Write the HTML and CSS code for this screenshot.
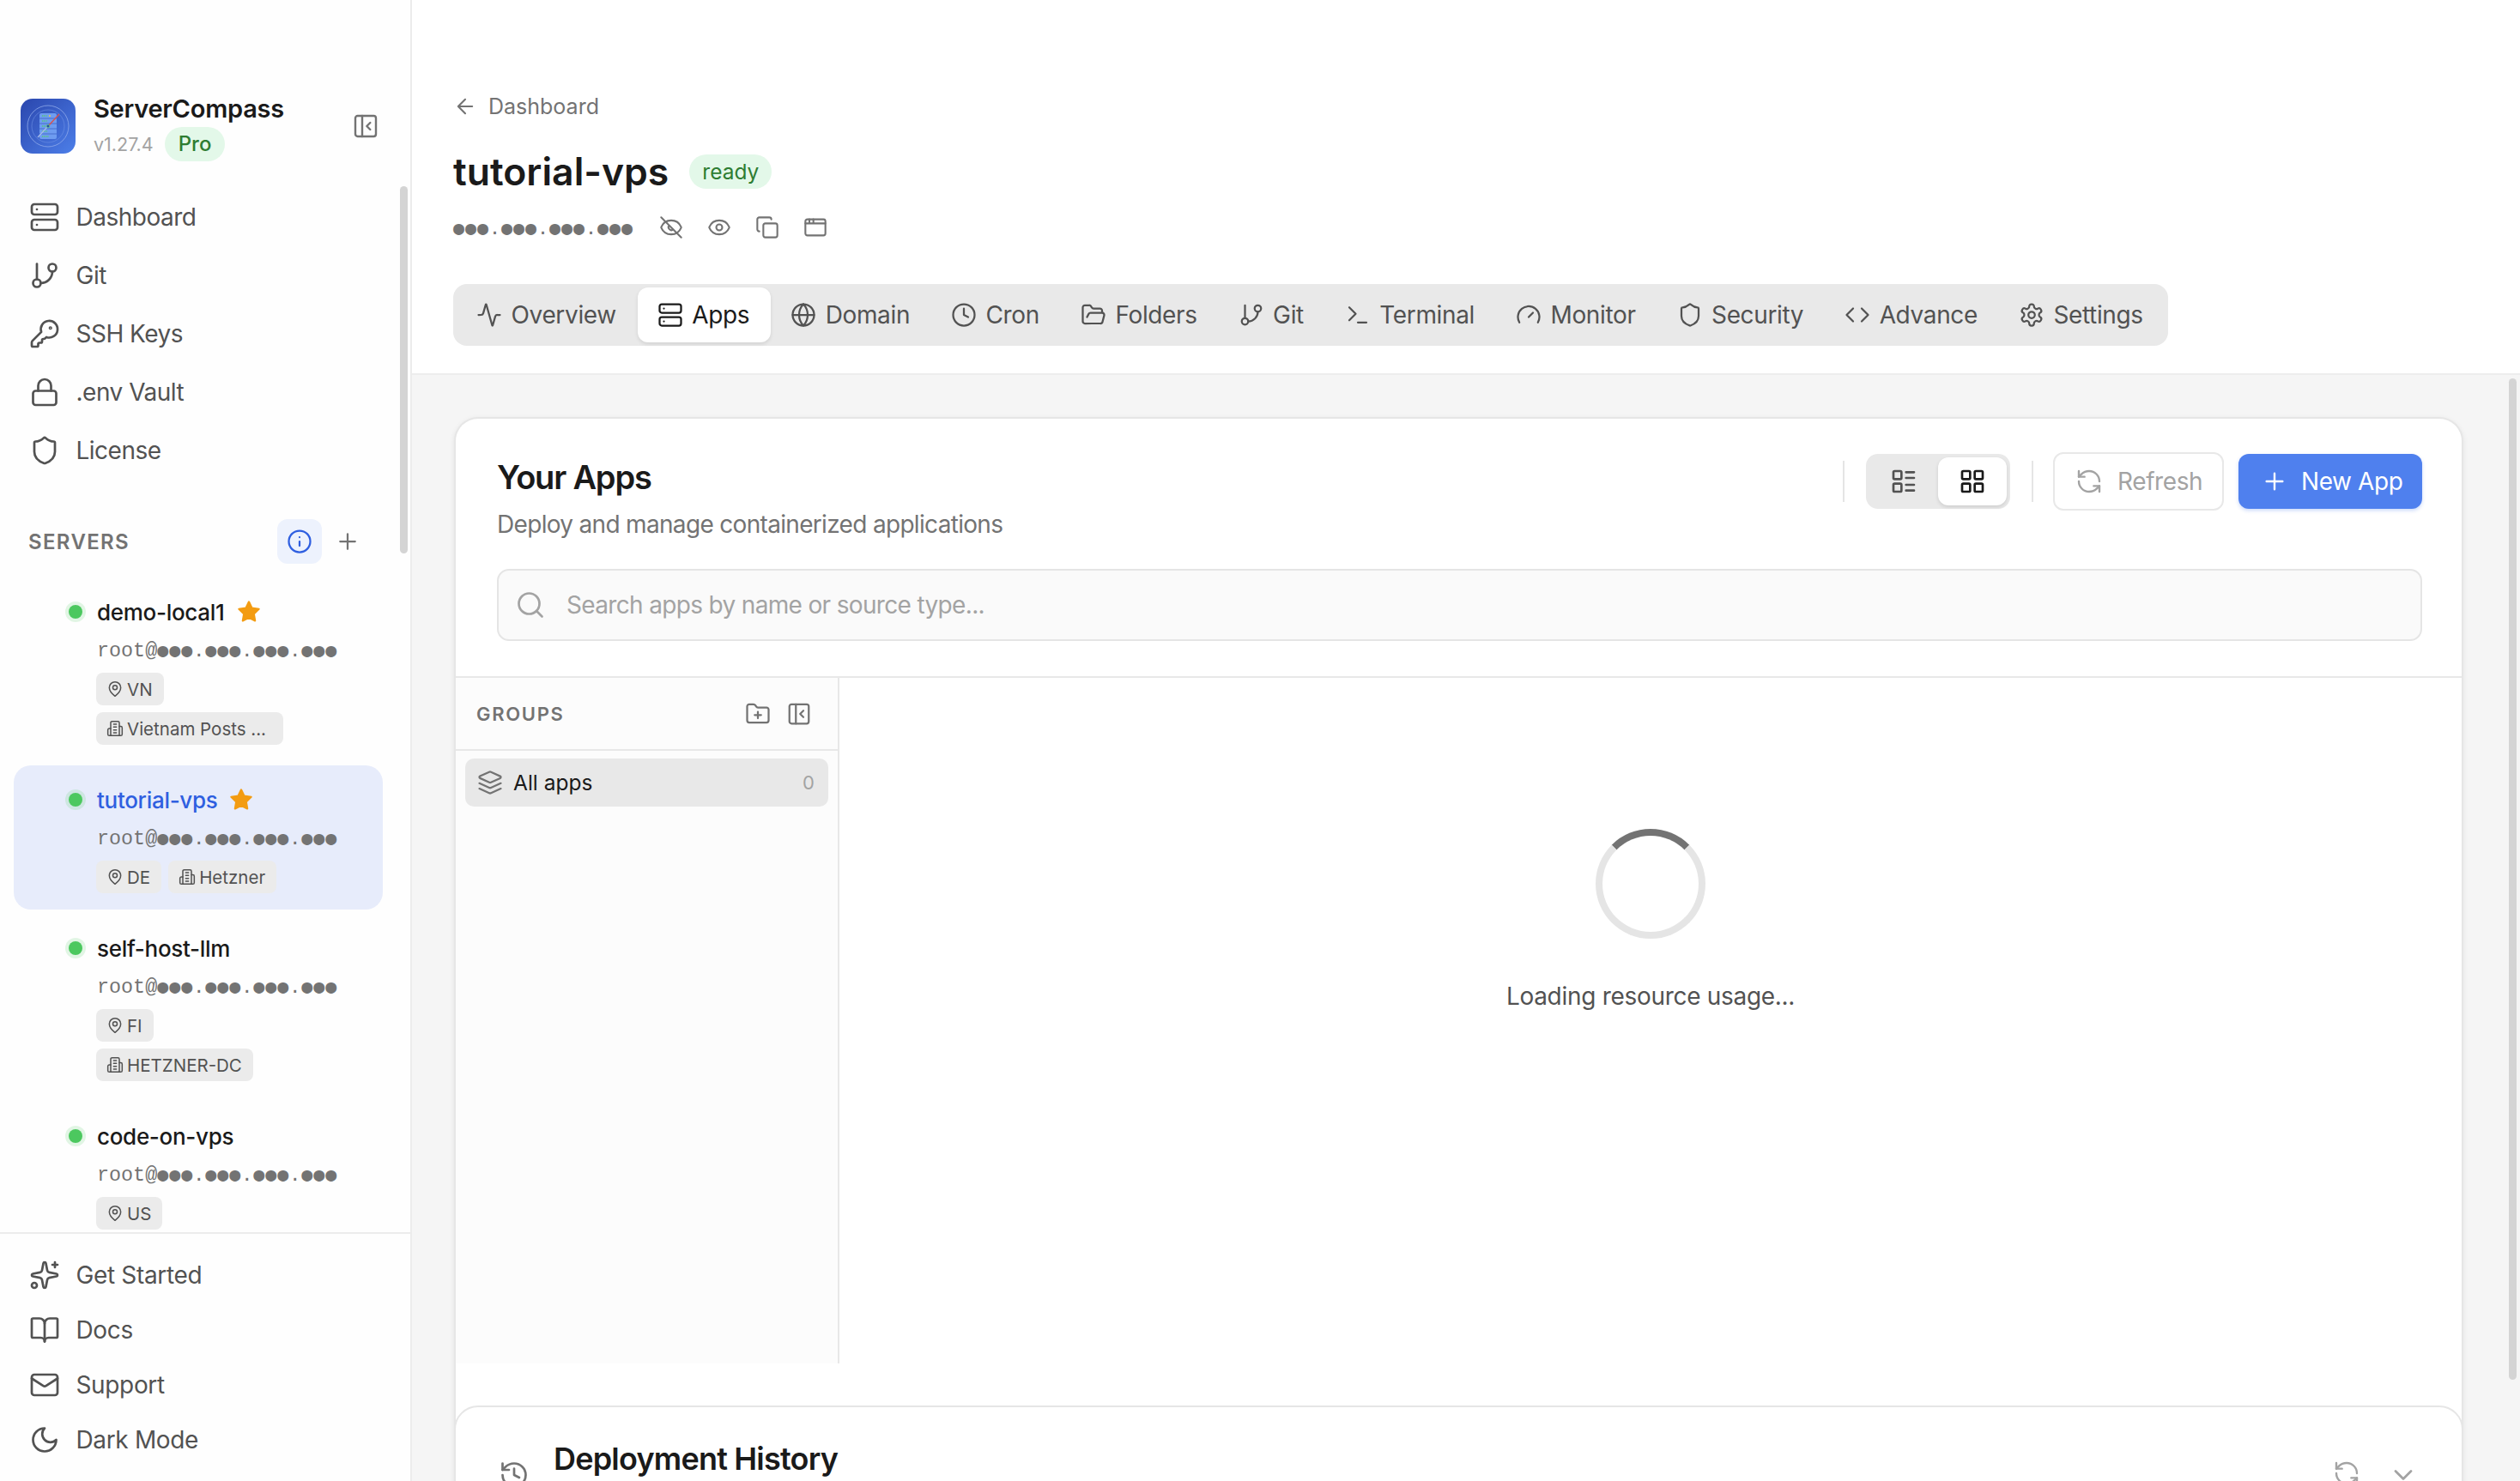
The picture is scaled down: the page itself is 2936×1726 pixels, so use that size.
FILE: index.html
```html
<!DOCTYPE html>
<html lang="en">
<head>
    <meta charset="UTF-8">
    <meta name="viewport" content="width=device-width, initial-scale=1.0">
    <title>ServerCompass</title>
    <link rel="stylesheet" href="styles.css">
</head>
<body>
    <svg class="sprite" aria-hidden="true">
        <symbol id="i-server" viewBox="0 0 24 24"><rect width="20" height="8" x="2" y="2" rx="2"/><rect width="20" height="8" x="2" y="14" rx="2"/><path d="M6 6h.01M6 18h.01"/></symbol>
        <symbol id="i-git" viewBox="0 0 24 24"><path d="M6 3v12"/><circle cx="18" cy="6" r="3"/><circle cx="6" cy="18" r="3"/><path d="M18 9a9 9 0 0 1-9 9"/></symbol>
        <symbol id="i-key" viewBox="0 0 24 24"><path d="M2.586 17.414A2 2 0 0 0 2 18.828V21a1 1 0 0 0 1 1h3a1 1 0 0 0 1-1v-1a1 1 0 0 1 1-1h1a1 1 0 0 0 1-1v-1a1 1 0 0 1 1-1h.172a2 2 0 0 0 1.414-.586l.814-.814a6.5 6.5 0 1 0-4-4z"/><circle cx="16.5" cy="7.5" r=".5"/></symbol>
        <symbol id="i-lock" viewBox="0 0 24 24"><rect width="18" height="11" x="3" y="11" rx="2"/><path d="M7 11V7a5 5 0 0 1 10 0v4"/></symbol>
        <symbol id="i-shield" viewBox="0 0 24 24"><path d="M20 13c0 5-3.5 7.5-7.66 8.95a1 1 0 0 1-.67-.01C7.5 20.5 4 18 4 13V6a1 1 0 0 1 1-1c2 0 4.5-1.2 6.24-2.72a1.17 1.17 0 0 1 1.52 0C14.51 3.81 17 5 19 5a1 1 0 0 1 1 1z"/></symbol>
        <symbol id="i-panel" viewBox="0 0 24 24"><rect width="18" height="18" x="3" y="3" rx="2"/><path d="M9 3v18M16 15l-3-3 3-3"/></symbol>
        <symbol id="i-info" viewBox="0 0 24 24"><circle cx="12" cy="12" r="10"/><path d="M12 16v-4M12 8h.01"/></symbol>
        <symbol id="i-plus" viewBox="0 0 24 24"><path d="M5 12h14M12 5v14"/></symbol>
        <symbol id="i-star" viewBox="0 0 24 24"><polygon points="12 2 15.09 8.26 22 9.27 17 14.14 18.18 21.02 12 17.77 5.82 21.02 7 14.14 2 9.27 8.91 8.26"/></symbol>
        <symbol id="i-pin" viewBox="0 0 24 24"><path d="M20 10c0 6-8 12-8 12s-8-6-8-12a8 8 0 0 1 16 0Z"/><circle cx="12" cy="10" r="3"/></symbol>
        <symbol id="i-building" viewBox="0 0 24 24"><path d="M6 22V4a2 2 0 0 1 2-2h8a2 2 0 0 1 2 2v18Z"/><path d="M6 12H4a2 2 0 0 0-2 2v6a2 2 0 0 0 2 2h2M18 9h2a2 2 0 0 1 2 2v9a2 2 0 0 1-2 2h-2M10 6h4M10 10h4M10 14h4M10 18h4"/></symbol>
        <symbol id="i-sparkles" viewBox="0 0 24 24"><path d="M11.017 2.814a1 1 0 0 1 1.966 0l1.051 5.558a2 2 0 0 0 1.594 1.594l5.558 1.051a1 1 0 0 1 0 1.966l-5.558 1.051a2 2 0 0 0-1.594 1.594l-1.051 5.558a1 1 0 0 1-1.966 0l-1.051-5.558a2 2 0 0 0-1.594-1.594l-5.558-1.051a1 1 0 0 1 0-1.966l5.558-1.051a2 2 0 0 0 1.594-1.594z"/><path d="M20 2v4M22 4h-4"/><circle cx="4" cy="20" r="2"/></symbol>
        <symbol id="i-book" viewBox="0 0 24 24"><path d="M12 7v14"/><path d="M3 18a1 1 0 0 1-1-1V4a1 1 0 0 1 1-1h5a4 4 0 0 1 4 4 4 4 0 0 1 4-4h5a1 1 0 0 1 1 1v13a1 1 0 0 1-1 1h-6a3 3 0 0 0-3 3 3 3 0 0 0-3-3z"/></symbol>
        <symbol id="i-mail" viewBox="0 0 24 24"><rect width="20" height="16" x="2" y="4" rx="2"/><path d="m22 7-8.97 5.7a1.94 1.94 0 0 1-2.06 0L2 7"/></symbol>
        <symbol id="i-moon" viewBox="0 0 24 24"><path d="M12 3a6 6 0 0 0 9 9 9 9 0 1 1-9-9Z"/></symbol>
        <symbol id="i-back" viewBox="0 0 24 24"><path d="m12 19-7-7 7-7M19 12H5"/></symbol>
        <symbol id="i-eye" viewBox="0 0 24 24"><path d="M2.062 12.348a1 1 0 0 1 0-.696 10.75 10.75 0 0 1 19.876 0 1 1 0 0 1 0 .696 10.75 10.75 0 0 1-19.876 0"/><circle cx="12" cy="12" r="3"/></symbol>
        <symbol id="i-eye-off" viewBox="0 0 24 24"><path d="M2.062 12.348a1 1 0 0 1 0-.696 10.75 10.75 0 0 1 19.876 0 1 1 0 0 1 0 .696 10.75 10.75 0 0 1-19.876 0"/><path d="M14.1 14.1a3 3 0 0 1-4.2-4.2M2 2l20 20"/></symbol>
        <symbol id="i-copy" viewBox="0 0 24 24"><rect width="14" height="14" x="8" y="8" rx="2"/><path d="M4 16c-1.1 0-2-.9-2-2V4c0-1.1.9-2 2-2h10c1.1 0 2 .9 2 2"/></symbol>
        <symbol id="i-window" viewBox="0 0 24 24"><rect width="20" height="16" x="2" y="4" rx="2"/><path d="M10 4v4M2 8h20M6 4v4"/></symbol>
        <symbol id="i-activity" viewBox="0 0 24 24"><path d="M22 12h-2.48a2 2 0 0 0-1.93 1.46l-2.35 8.36a.25.25 0 0 1-.48 0L9.24 2.18a.25.25 0 0 0-.48 0l-2.35 8.36A2 2 0 0 1 4.49 12H2"/></symbol>
        <symbol id="i-globe" viewBox="0 0 24 24"><circle cx="12" cy="12" r="10"/><path d="M12 2a14.5 14.5 0 0 0 0 20 14.5 14.5 0 0 0 0-20M2 12h20"/></symbol>
        <symbol id="i-clock" viewBox="0 0 24 24"><circle cx="12" cy="12" r="10"/><path d="M12 6v6l4 2"/></symbol>
        <symbol id="i-folder" viewBox="0 0 24 24"><path d="m6 14 1.5-2.9A2 2 0 0 1 9.24 10H20a2 2 0 0 1 1.94 2.5l-1.54 6a2 2 0 0 1-1.95 1.5H4a2 2 0 0 1-2-2V5a2 2 0 0 1 2-2h3.9a2 2 0 0 1 1.69.9l.81 1.2a2 2 0 0 0 1.67.9H18a2 2 0 0 1 2 2v2"/></symbol>
        <symbol id="i-terminal" viewBox="0 0 24 24"><path d="m4 17 6-6-6-6M12 19h8"/></symbol>
        <symbol id="i-gauge" viewBox="0 0 24 24"><path d="m12 14 4-4"/><path d="M3.34 19a10 10 0 1 1 17.32 0"/></symbol>
        <symbol id="i-code" viewBox="0 0 24 24"><path d="m16 18 6-6-6-6M8 6l-6 6 6 6"/></symbol>
        <symbol id="i-settings" viewBox="0 0 24 24"><path d="M12.22 2h-.44a2 2 0 0 0-2 2v.18a2 2 0 0 1-1 1.73l-.43.25a2 2 0 0 1-2 0l-.15-.08a2 2 0 0 0-2.73.73l-.22.38a2 2 0 0 0 .73 2.73l.15.1a2 2 0 0 1 1 1.72v.51a2 2 0 0 1-1 1.74l-.15.09a2 2 0 0 0-.73 2.73l.22.38a2 2 0 0 0 2.73.73l.15-.08a2 2 0 0 1 2 0l.43.25a2 2 0 0 1 1 1.73V20a2 2 0 0 0 2 2h.44a2 2 0 0 0 2-2v-.18a2 2 0 0 1 1-1.73l.43-.25a2 2 0 0 1 2 0l.15.08a2 2 0 0 0 2.73-.73l.22-.39a2 2 0 0 0-.73-2.73l-.15-.08a2 2 0 0 1-1-1.74v-.5a2 2 0 0 1 1-1.74l.15-.09a2 2 0 0 0 .73-2.73l-.22-.38a2 2 0 0 0-2.73-.73l-.15.08a2 2 0 0 1-2 0l-.43-.25a2 2 0 0 1-1-1.73V4a2 2 0 0 0-2-2z"/><circle cx="12" cy="12" r="3"/></symbol>
        <symbol id="i-list" viewBox="0 0 24 24"><rect width="7" height="7" x="3" y="3" rx="1"/><rect width="7" height="7" x="3" y="14" rx="1"/><path d="M14 4h7M14 9h7M14 15h7M14 20h7"/></symbol>
        <symbol id="i-grid" viewBox="0 0 24 24"><rect width="7" height="7" x="3" y="3" rx="1"/><rect width="7" height="7" x="14" y="3" rx="1"/><rect width="7" height="7" x="14" y="14" rx="1"/><rect width="7" height="7" x="3" y="14" rx="1"/></symbol>
        <symbol id="i-refresh" viewBox="0 0 24 24"><path d="M21 12a9 9 0 0 0-9-9 9.75 9.75 0 0 0-6.74 2.74L3 8"/><path d="M3 3v5h5"/><path d="M3 12a9 9 0 0 0 9 9 9.75 9.75 0 0 0 6.74-2.74L21 16"/><path d="M16 16h5v5"/></symbol>
        <symbol id="i-search" viewBox="0 0 24 24"><path d="m21 21-4.3-4.3"/><circle cx="11" cy="11" r="8"/></symbol>
        <symbol id="i-folder-plus" viewBox="0 0 24 24"><path d="M12 10v6M9 13h6"/><path d="M20 20a2 2 0 0 0 2-2V8a2 2 0 0 0-2-2h-7.9a2 2 0 0 1-1.69-.9L9.6 3.9A2 2 0 0 0 7.93 3H4a2 2 0 0 0-2 2v13a2 2 0 0 0 2 2Z"/></symbol>
        <symbol id="i-layers" viewBox="0 0 24 24"><path d="M12.83 2.18a2 2 0 0 0-1.66 0L2.6 6.08a1 1 0 0 0 0 1.83l8.58 3.91a2 2 0 0 0 1.66 0l8.58-3.9a1 1 0 0 0 0-1.83Z"/><path d="m22 17.65-9.17 4.16a2 2 0 0 1-1.66 0L2 17.65M22 12.65l-9.17 4.16a2 2 0 0 1-1.66 0L2 12.65"/></symbol>
        <symbol id="i-history" viewBox="0 0 24 24"><path d="M3 12a9 9 0 1 0 9-9 9.75 9.75 0 0 0-6.74 2.74L3 8"/><path d="M3 3v5h5M12 7v5l4 2"/></symbol>
        <symbol id="i-chevron" viewBox="0 0 24 24"><path d="m6 9 6 6 6-6"/></symbol>
    </svg>

    <div class="app">
        <aside class="sidebar">
            <div class="brand">
                <svg class="logo" viewBox="0 0 64 64">
                    <defs>
                        <linearGradient id="logo-bg" x1="0" y1="0" x2="1" y2="1">
                            <stop offset="0" stop-color="#2a46ad"/>
                            <stop offset="1" stop-color="#4d7fe9"/>
                        </linearGradient>
                    </defs>
                    <rect width="64" height="64" rx="14" fill="url(#logo-bg)"/>
                    <circle cx="32" cy="32" r="24" fill="none" stroke="#8fa9ea" stroke-width=".8"/>
                    <circle cx="32" cy="32" r="19" fill="none" stroke="#6f92e6" stroke-width=".6"/>
                    <rect x="22" y="17" width="20" height="30" rx="2" fill="#6e9cf0"/>
                    <path d="M22 23h20M22 29h20M22 35h20M22 41h20" stroke="#3c63c4" stroke-width=".8"/>
                    <path d="M25 20h6M25 26h6M25 38h6M25 44h8M25 32h4" stroke="#58c777" stroke-width="1.4" stroke-dasharray="1.5 1"/>
                    <circle cx="34" cy="20" r="1" fill="#f2c84b"/>
                    <path d="M33 31 45 18" stroke="#d9534f" stroke-width="1.4"/>
                    <path d="M31 33 20 45" stroke="#a9bde8" stroke-width="1.2"/>
                    <circle cx="32" cy="32" r="1.8" fill="#2a46ad" stroke="#58c777" stroke-width=".8"/>
                </svg>
                <div class="brand-text">
                    <div class="brand-name">ServerCompass</div>
                    <div class="brand-meta"><span class="version">v1.27.4</span><span class="badge badge-pro">Pro</span></div>
                </div>
                <svg class="icon brand-toggle"><use href="#i-panel"/></svg>
            </div>

            <div class="sidebar-scroll">
                <nav class="nav">
                    <a class="nav-item"><svg class="icon"><use href="#i-server"/></svg>Dashboard</a>
                    <a class="nav-item"><svg class="icon"><use href="#i-git"/></svg>Git</a>
                    <a class="nav-item"><svg class="icon"><use href="#i-key"/></svg>SSH Keys</a>
                    <a class="nav-item"><svg class="icon"><use href="#i-lock"/></svg>.env Vault</a>
                    <a class="nav-item"><svg class="icon"><use href="#i-shield"/></svg>License</a>
                </nav>

                <div class="servers-head">
                    <span class="servers-title">SERVERS</span>
                    <span class="info-btn"><svg class="icon"><use href="#i-info"/></svg></span>
                    <svg class="icon add-btn"><use href="#i-plus"/></svg>
                </div>

                <div class="server">
                    <div class="server-name"><span class="dot"></span>demo-local1<svg class="icon star"><use href="#i-star"/></svg></div>
                    <div class="server-ip">root@<span class="mask">●●●.●●●.●●●.●●●</span></div>
                    <div class="tags">
                        <span class="tag"><svg class="icon"><use href="#i-pin"/></svg>VN</span>
                        <span class="tag tag-wide"><svg class="icon"><use href="#i-building"/></svg>Vietnam Posts ...</span>
                    </div>
                </div>
                <div class="server server-active">
                    <div class="server-name"><span class="dot"></span>tutorial-vps<svg class="icon star"><use href="#i-star"/></svg></div>
                    <div class="server-ip">root@<span class="mask">●●●.●●●.●●●.●●●</span></div>
                    <div class="tags">
                        <span class="tag"><svg class="icon"><use href="#i-pin"/></svg>DE</span>
                        <span class="tag"><svg class="icon"><use href="#i-building"/></svg>Hetzner</span>
                    </div>
                </div>
                <div class="server">
                    <div class="server-name"><span class="dot"></span>self-host-llm</div>
                    <div class="server-ip">root@<span class="mask">●●●.●●●.●●●.●●●</span></div>
                    <div class="tags">
                        <span class="tag"><svg class="icon"><use href="#i-pin"/></svg>FI</span>
                        <span class="tag"><svg class="icon"><use href="#i-building"/></svg>HETZNER-DC</span>
                    </div>
                </div>
                <div class="server">
                    <div class="server-name"><span class="dot"></span>code-on-vps</div>
                    <div class="server-ip">root@<span class="mask">●●●.●●●.●●●.●●●</span></div>
                    <div class="tags">
                        <span class="tag"><svg class="icon"><use href="#i-pin"/></svg>US</span>
                    </div>
                </div>
            </div>

            <div class="sidebar-foot">
                <a class="foot-item"><svg class="icon"><use href="#i-sparkles"/></svg>Get Started</a>
                <a class="foot-item"><svg class="icon"><use href="#i-book"/></svg>Docs</a>
                <a class="foot-item"><svg class="icon"><use href="#i-mail"/></svg>Support</a>
                <a class="foot-item"><svg class="icon"><use href="#i-moon"/></svg>Dark Mode</a>
            </div>
            <div class="thumb thumb-side"></div>
        </aside>

        <main class="main">
            <header class="page-head">
                <a class="back"><svg class="icon"><use href="#i-back"/></svg>Dashboard</a>
                <div class="title-row">
                    <h1>tutorial-vps</h1>
                    <span class="badge badge-ready">ready</span>
                </div>
                <div class="ip-row">
                    <span class="ip mask">●●●.●●●.●●●.●●●</span>
                    <svg class="icon"><use href="#i-eye-off"/></svg>
                    <svg class="icon"><use href="#i-eye"/></svg>
                    <svg class="icon"><use href="#i-copy"/></svg>
                    <svg class="icon"><use href="#i-window"/></svg>
                </div>
                <div class="tabs">
                    <a class="tab"><svg class="icon"><use href="#i-activity"/></svg>Overview</a>
                    <a class="tab tab-active"><svg class="icon"><use href="#i-server"/></svg>Apps</a>
                    <a class="tab"><svg class="icon"><use href="#i-globe"/></svg>Domain</a>
                    <a class="tab"><svg class="icon"><use href="#i-clock"/></svg>Cron</a>
                    <a class="tab"><svg class="icon"><use href="#i-folder"/></svg>Folders</a>
                    <a class="tab"><svg class="icon"><use href="#i-git"/></svg>Git</a>
                    <a class="tab"><svg class="icon"><use href="#i-terminal"/></svg>Terminal</a>
                    <a class="tab"><svg class="icon"><use href="#i-gauge"/></svg>Monitor</a>
                    <a class="tab"><svg class="icon"><use href="#i-shield"/></svg>Security</a>
                    <a class="tab"><svg class="icon"><use href="#i-code"/></svg>Advance</a>
                    <a class="tab"><svg class="icon"><use href="#i-settings"/></svg>Settings</a>
                </div>
            </header>

            <div class="content">
                <section class="card">
                    <div class="card-head">
                        <div class="card-top">
                            <div>
                                <h2>Your Apps</h2>
                                <p class="card-sub">Deploy and manage containerized applications</p>
                            </div>
                            <div class="actions">
                                <span class="sep"></span>
                                <div class="toggle">
                                    <span class="toggle-btn"><svg class="icon"><use href="#i-list"/></svg></span>
                                    <span class="toggle-btn toggle-on"><svg class="icon"><use href="#i-grid"/></svg></span>
                                </div>
                                <span class="sep"></span>
                                <button class="btn btn-refresh"><svg class="icon"><use href="#i-refresh"/></svg>Refresh</button>
                                <button class="btn btn-primary"><svg class="icon"><use href="#i-plus"/></svg>New App</button>
                            </div>
                        </div>
                        <div class="search"><svg class="icon"><use href="#i-search"/></svg><span>Search apps by name or source type...</span></div>
                    </div>

                    <div class="card-body">
                        <div class="groups">
                            <div class="groups-head">
                                <span class="groups-title">GROUPS</span>
                                <svg class="icon"><use href="#i-folder-plus"/></svg>
                                <svg class="icon"><use href="#i-panel"/></svg>
                            </div>
                            <div class="group-row">
                                <svg class="icon"><use href="#i-layers"/></svg>
                                <span class="group-name">All apps</span>
                                <span class="group-count">0</span>
                            </div>
                        </div>
                        <div class="loading">
                            <div class="spinner"></div>
                            <p>Loading resource usage...</p>
                        </div>
                    </div>

                    <section class="history">
                        <svg class="icon history-icon"><use href="#i-history"/></svg>
                        <h3>Deployment History</h3>
                        <svg class="icon history-refresh"><use href="#i-refresh"/></svg>
                        <svg class="icon history-chevron"><use href="#i-chevron"/></svg>
                    </section>
                </section>
            </div>
            <div class="thumb thumb-main"></div>
        </main>
    </div>
</body>
</html>
```

FILE: styles.css
```css
* {
    box-sizing: border-box;
}

body {
    margin: 0;
    font-family: Inter, "Noto Sans", sans-serif;
    font-size: 28px;
    color: #1a1a1a;
    background: #fff;
}

h1, h2, h3, p {
    margin: 0;
}

.sprite {
    display: none;
}

.icon {
    flex: none;
    width: 36px;
    height: 36px;
    fill: none;
    stroke: currentColor;
    stroke-width: 1.8;
    stroke-linecap: round;
    stroke-linejoin: round;
}

.mask {
    font-family: "DejaVu Sans Mono", monospace;
    font-size: 21.6px;
    letter-spacing: 1px;
}

.app {
    display: flex;
    height: 100vh;
    overflow: hidden;
}

/* sidebar */
.sidebar {
    position: relative;
    display: flex;
    flex-direction: column;
    flex: none;
    width: 480px;
    background: #fefefe;
    border-right: 2px solid #ececec;
}

.brand {
    display: flex;
    align-items: center;
    height: 64px;
    margin-top: 115px;
    padding: 0 36px 0 24px;
}

.logo {
    flex: none;
    width: 64px;
    height: 64px;
    margin-right: 21px;
}

.brand-text {
    flex: 1;
}

.brand-name {
    font-size: 29px;
    font-weight: 600;
    line-height: 36px;
    margin-top: 2px;
    letter-spacing: -0.25px;
    color: #1a1a1a;
}

.brand-meta {
    display: flex;
    align-items: center;
    gap: 13px;
    margin-top: 3px;
}

.version {
    font-size: 21.5px;
    color: #a3a3a3;
}

.badge {
    display: inline-flex;
    align-items: center;
    height: 40px;
    border-radius: 20px;
    background: #e3f8e9;
    color: #2e7d32;
}

.badge-pro {
    padding: 0 16px;
    font-size: 24px;
    font-weight: 500;
}

.brand-toggle {
    width: 32px;
    height: 32px;
    color: #737373;
}

.sidebar-scroll {
    flex: 1;
    min-height: 0;
    overflow: hidden;
    padding-top: 40px;
}

.nav-item {
    display: flex;
    align-items: center;
    gap: 18.5px;
    height: 68px;
    padding-left: 34px;
    letter-spacing: -0.5px;
    color: #525252;
}

.servers-head {
    display: flex;
    align-items: center;
    height: 52px;
    margin-top: 46px;
    padding: 0 58px 0 33px;
}

.servers-title {
    flex: 1;
    font-size: 24px;
    font-weight: 600;
    letter-spacing: 1.35px;
    color: #737373;
}

.info-btn {
    display: flex;
    align-items: center;
    justify-content: center;
    width: 52px;
    height: 52px;
    border-radius: 12px;
    background: #edf2fd;
    color: #2f5fe0;
}

.info-btn .icon {
    width: 30px;
    height: 30px;
}

.add-btn {
    width: 30px;
    height: 30px;
    margin-left: 15px;
    color: #737373;
}

.server {
    width: 430px;
    margin: 0 0 5px 16px;
    padding: 20px 0 19px;
    border-radius: 20px;
}

.servers-head + .server {
    margin-top: 16px;
}

.server-active {
    background: #e7ecfb;
}

.server-active .server-name {
    color: #2f5fe0;
}

.server-name {
    display: flex;
    align-items: center;
    height: 40px;
    padding-left: 64px;
    font-size: 26px;
    font-weight: 500;
    letter-spacing: -0.3px;
    color: #1a1a1a;
}

.dot {
    flex: none;
    width: 16px;
    height: 16px;
    margin-right: 17px;
    border-radius: 50%;
    background: #4cc85f;
    box-shadow: 0 0 0 4px rgba(76, 200, 95, 0.16);
}

.star {
    width: 28px;
    height: 28px;
    margin-left: 14px;
    fill: #f39c12;
    color: #f39c12;
}

.server-ip {
    height: 38px;
    margin-top: 6px;
    padding-left: 97px;
    font-family: "Liberation Mono", "DejaVu Sans Mono", monospace;
    font-size: 23.4px;
    line-height: 38px;
    color: #737373;
}

.tags {
    display: flex;
    flex-wrap: wrap;
    gap: 8px;
    max-width: 346px;
    margin-top: 7px;
    padding-left: 96px;
}

.tag {
    display: inline-flex;
    align-items: center;
    gap: 4px;
    height: 38px;
    padding: 0 13px 0 12px;
    border-radius: 8px;
    background: #ebebeb;
    font-size: 20.5px;
    color: #525252;
    white-space: nowrap;
}

.tag .icon {
    width: 20px;
    height: 20px;
}

.tag-wide {
    width: 218px;
}

.sidebar-foot {
    flex: none;
    height: 290px;
    padding-top: 16px;
    background: #fefefe;
    border-top: 2px solid #ececec;
}

.foot-item {
    display: flex;
    align-items: center;
    gap: 18.5px;
    height: 64px;
    padding-left: 34px;
    letter-spacing: -0.35px;
    color: #525252;
}

.thumb {
    position: absolute;
    width: 9px;
    border-radius: 5px;
    background: #d4d4d4;
}

.thumb-side {
    top: 217px;
    left: 466px;
    height: 428px;
}

.thumb-main {
    top: 441px;
    right: 4px;
    height: 1167px;
}

/* main */
.main {
    position: relative;
    display: flex;
    flex-direction: column;
    flex: 1;
    min-width: 0;
    overflow: hidden;
    background: #f5f5f5;
}

.page-head {
    flex: none;
    padding: 106px 0 32px 48px;
    background: #fff;
    border-bottom: 2px solid #ededed;
}

.back {
    display: flex;
    align-items: center;
    gap: 13px;
    height: 36px;
    font-size: 25px;
    color: #737373;
}

.back .icon {
    width: 28px;
    height: 28px;
}

.title-row {
    display: flex;
    align-items: center;
    gap: 24px;
    height: 60px;
    margin-top: 28px;
}

h1 {
    font-size: 44.5px;
    font-weight: 600;
}

.badge-ready {
    padding: 0 15px;
    font-size: 24.5px;
}

.ip-row {
    display: flex;
    align-items: center;
    gap: 28px;
    height: 36px;
    margin-top: 17px;
    color: #737373;
}

.ip {
    width: 212px;
}

.ip-row .icon {
    width: 28px;
    height: 28px;
}

.tabs {
    display: inline-flex;
    align-items: stretch;
    height: 72px;
    margin-top: 48px;
    padding: 4px;
    border-radius: 16px;
    background: #e9e9e9;
}

.tab {
    display: flex;
    align-items: center;
    gap: 10.5px;
    padding: 0 24.9px 0 23px;
    border-radius: 12px;
    letter-spacing: -0.35px;
    color: #525252;
}

.tab .icon {
    width: 30px;
    height: 30px;
}

.tab-active {
    background: #fff;
    color: #1a1a1a;
    box-shadow: 0 2px 4px rgba(0, 0, 0, 0.1);
}

.content {
    flex: 1;
    min-height: 0;
    padding: 49px 66px 0 49px;
}

.card {
    background: #fff;
    border: 2px solid #e6e6e6;
    border-bottom: 0;
    border-radius: 28px 28px 0 0;
    box-shadow: 0 2px 6px rgba(0, 0, 0, 0.08);
}

.card-head {
    padding: 41px 46px 41px 48px;
    border-bottom: 2px solid #e8e8e8;
}

.card-top {
    display: flex;
    justify-content: space-between;
}

h2 {
    font-size: 38px;
    font-weight: 600;
    line-height: 56px;
    letter-spacing: -1.2px;
    margin-top: -1px;
}

.card-sub {
    margin-top: 7px;
    line-height: 40px;
    letter-spacing: -0.68px;
    color: #737373;
}

.actions {
    display: flex;
    align-items: flex-start;
    gap: 25px;
}

.sep {
    width: 2px;
    height: 48px;
    margin-top: 8px;
    background: #e5e5e5;
}

.toggle {
    display: flex;
    width: 168px;
    height: 64px;
    padding: 4px;
    border-radius: 14px;
    background: #e9e9e9;
}

.toggle-btn {
    display: flex;
    align-items: center;
    justify-content: center;
    width: 80px;
    color: #525252;
}

.toggle-btn .icon {
    width: 32px;
    height: 32px;
    stroke-width: 2;
}

.toggle-on {
    border-radius: 12px;
    background: #fff;
    color: #1a1a1a;
    box-shadow: 0 2px 4px rgba(0, 0, 0, 0.12);
}

.btn {
    display: flex;
    align-items: center;
    font-family: inherit;
    font-size: 28px;
    letter-spacing: -0.4px;
    border-radius: 12px;
}

.btn .icon {
    width: 32px;
    height: 32px;
}

.btn-refresh {
    gap: 17px;
    width: 199px;
    height: 68px;
    margin: -2px -8px 0 -2px;
    padding: 0 0 0 24px;
    border: 2px solid #e8e8e8;
    background: #fff;
    color: #a3a3a3;
}

.btn-primary {
    gap: 15px;
    width: 214px;
    height: 64px;
    padding: 0 0 0 26px;
    border: 0;
    background: #4f80ee;
    color: #fff;
    box-shadow: 0 2px 4px rgba(79, 128, 238, 0.3);
}

.search {
    display: flex;
    align-items: center;
    gap: 24px;
    height: 84px;
    margin-top: 32px;
    padding-left: 19px;
    border: 2px solid #e5e5e5;
    border-radius: 14px;
    background: #fafafa;
    letter-spacing: -0.66px;
    color: #a3a3a3;
}

.card-body {
    display: flex;
    height: 799px;
}

.groups {
    flex: none;
    width: 447px;
    background: #fcfcfc;
    border-right: 2px solid #e8e8e8;
}

.groups-head {
    display: flex;
    align-items: center;
    gap: 18px;
    height: 85px;
    padding: 0 30px 0 24px;
    border-bottom: 2px solid #e8e8e8;
    color: #737373;
}

.groups-head .icon {
    width: 30px;
    height: 30px;
}

.groups-title {
    flex: 1;
    font-size: 22px;
    font-weight: 600;
    letter-spacing: 1.7px;
}

.group-row {
    display: flex;
    align-items: center;
    gap: 12px;
    height: 56px;
    margin: 9px 11px;
    padding: 0 16px 0 14px;
    border-radius: 10px;
    background: #e8e8e8;
    font-size: 24.5px;
}

.group-row .icon {
    width: 30px;
    height: 30px;
    color: #737373;
}

.group-name {
    flex: 1;
}

.group-count {
    font-size: 22px;
    color: #a3a3a3;
}

.loading {
    flex: 1;
    display: flex;
    flex-direction: column;
    align-items: center;
    padding-top: 176px;
    color: #525252;
}

.spinner {
    width: 128px;
    height: 128px;
    border: 8px solid #e5e5e5;
    border-top-color: #737373;
    border-radius: 50%;
}

.loading p {
    margin-top: 47px;
    line-height: 40px;
    letter-spacing: -0.3px;
}

.history {
    display: flex;
    height: 200px;
    margin: 49px -2px 0;
    padding: 35px 50px 0 50px;
    background: #fff;
    border: 2px solid #e6e6e6;
    border-radius: 28px 28px 0 0;
}

.history-icon {
    margin-top: 26px;
    color: #737373;
}

.history h3 {
    flex: 1;
    margin-left: 28px;
    font-size: 36px;
    font-weight: 600;
    line-height: 50px;
    letter-spacing: -0.8px;
}

.history-refresh {
    width: 32px;
    height: 32px;
    margin-top: 26px;
    color: #a3a3a3;
}

.history-chevron {
    width: 36px;
    height: 36px;
    margin: 26px 0 0 32px;
    color: #a3a3a3;
}
```
